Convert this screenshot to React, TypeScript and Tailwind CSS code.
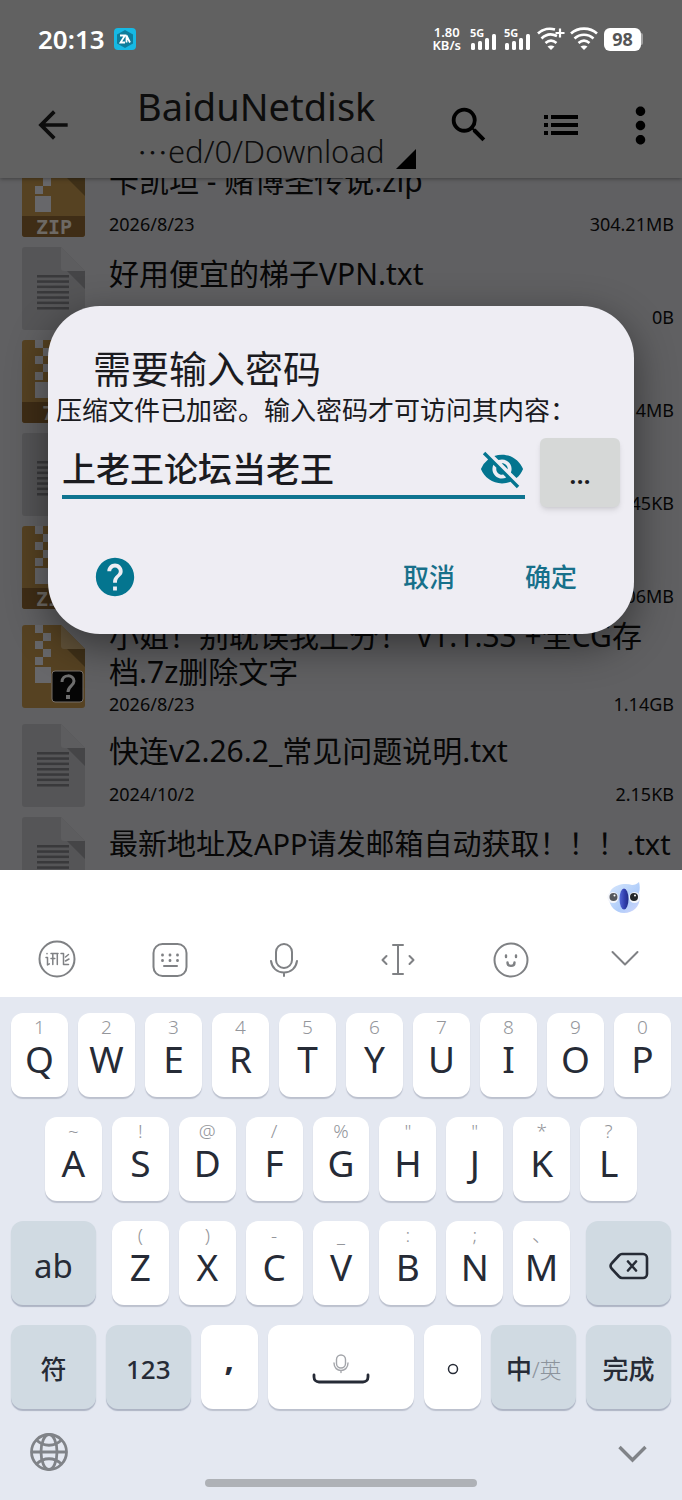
import React from 'react';
import { MdArrowBack, MdHelp, MdMoreVert, MdSearch, MdVisibilityOff } from 'react-icons/md';

type IconKind = 'zip' | '7z' | 'txt' | 'unknown';

interface FileItem {
    name: string;
    date: string;
    size: string;
    kind: IconKind;
    tall?: boolean;
    long?: boolean;
}

const files: FileItem[] = [
    { name: '卡凯坦 - 赌博圣传说.zip', date: '2026/8/23', size: '304.21MB', kind: 'zip' },
    { name: '好用便宜的梯子VPN.txt', date: '', size: '0B', kind: 'txt' },
    { name: '', date: '', size: '4MB', kind: '7z' },
    { name: '', date: '', size: '45KB', kind: 'txt' },
    { name: '', date: '', size: '06MB', kind: 'zip' },
    { name: '小姐！别耽误我上分！ v1.1.33 +全CG存档.7z删除文字', date: '2026/8/23', size: '1.14GB', kind: 'unknown', tall: true },
    { name: '快连v2.26.2_常见问题说明.txt', date: '2024/10/2', size: '2.15KB', kind: 'txt' },
    { name: '最新地址及APP请发邮箱自动获取！！！.txt', date: '', size: '', kind: 'txt', long: true },
];

const rowOne = [['Q', '1'], ['W', '2'], ['E', '3'], ['R', '4'], ['T', '5'], ['Y', '6'], ['U', '7'], ['I', '8'], ['O', '9'], ['P', '0']];
const rowTwo = [['A', '~'], ['S', '!'], ['D', '@'], ['F', '/'], ['G', '%'], ['H', '"'], ['J', '"'], ['K', '*'], ['L', '?']];
const rowThree = [['Z', '('], ['X', ')'], ['C', '-'], ['V', '_'], ['B', ':'], ['N', ';'], ['M', '、']];

const FileIcon: React.FC<{ kind: IconKind }> = ({ kind }) => {
    if (kind === 'txt') {
        return (
            <svg width="63" height="83" viewBox="0 0 63 83" className="shrink-0" aria-hidden="true">
                <path d="M3 0H39L63 24V80a3 3 0 0 1-3 3H3a3 3 0 0 1-3-3V3a3 3 0 0 1 3-3z" fill="#555557" />
                <path d="M39 0L63 24H42a3 3 0 0 1-3-3z" fill="#5d5d5f" />
                <path d="M45 24H63V42z" fill="#454547" />
                {[28, 33.3, 38.6, 44, 49.3, 54.6, 60].map((y) => (
                    <rect key={y} x="15" y={y} width="32" height="2.500" fill="#39393b" />
                ))}
            </svg>
        );
    }
    return (
        <svg width="63" height="83" viewBox="0 0 63 83" className="shrink-0" aria-hidden="true">
            <path d="M3 0H39L63 24V80a3 3 0 0 1-3 3H3a3 3 0 0 1-3-3V3a3 3 0 0 1 3-3z" fill="#564222" />
            <path d="M39 0L63 24H42a3 3 0 0 1-3-3z" fill="#615239" />
            <path d="M45 24H63V42z" fill="#3f3018" />
            <path d="M13 0h8v8h8v8h-8v8h8v8h-8v8h-8v-8h8v-8h-8v-8h8v-8h-8z" fill="#67676a" />
            <rect x="13" y="42" width="16" height="16" fill="#67676a" />
            {kind === 'unknown' ? (
                <g>
                    <rect x="30" y="46" width="31" height="31" rx="3" fill="#050505" stroke="#77706a" />
                    <path d="M40 57c0-8 12-8 12-1 0 5-6 5-6 11" fill="none" stroke="#6e6e6e" strokeWidth="3" />
                    <rect x="44" y="70" width="4" height="4" fill="#6e6e6e" />
                </g>
            ) : (
                <g>
                    <path d="M0 62H63V80a3 3 0 0 1-3 3H3a3 3 0 0 1-3-3z" fill="#3f2d16" />
                    <text x="32" y="80" textAnchor="middle" fontSize="20" fontWeight="700" fontFamily="DejaVu Sans Mono, monospace" fill="#6d6964">
                        {kind === 'zip' ? 'ZIP' : '7Z'}
                    </text>
                </g>
            )}
        </svg>
    );
};

const FileRow: React.FC<{ file: FileItem }> = ({ file }) => (
    <li className={file.tall ? 'flex h-[105px] items-center pl-[22px] pr-2' : 'flex h-[93px] items-center pl-[22px] pr-2'}>
        <FileIcon kind={file.kind} />
        <div className={file.tall ? 'ml-6 flex h-full flex-1 flex-col justify-between pt-1 pb-[3px]' : 'ml-6 flex h-full flex-1 flex-col justify-between pt-[14px] pb-[6px] whitespace-nowrap'}>
            <div className={file.long ? 'min-h-9 text-[29px] leading-9' : 'min-h-9 text-[30px] leading-9'}>{file.name}</div>
            <div className="flex h-6 justify-between text-[18px] leading-6">
                <span>{file.date}</span>
                <span>{file.size}</span>
            </div>
        </div>
    </li>
);

const SignalBars: React.FC = () => (
    <div className="flex w-[27px] flex-col">
        <span className="text-[11px] leading-[10px] font-bold">5G</span>
        <svg width="27" height="16" viewBox="0 0 27 16" className="-mt-1" aria-hidden="true">
            <g fill="#fff">
                <rect x="1" y="9" width="4" height="7" rx="1.5" />
                <rect x="8" y="7" width="4" height="9" rx="1.5" />
                <rect x="15" y="4" width="4" height="12" rx="1.5" />
                <rect x="22" y="0" width="4" height="16" rx="1.5" />
            </g>
        </svg>
    </div>
);

const Wifi: React.FC<{ plus?: boolean }> = ({ plus }) => (
    <svg width="28" height="24" viewBox="0 0 28 24" fill="none" stroke="#fff" strokeWidth="2.6" aria-hidden="true">
        <path d={plus ? 'M1 6.5C6 1.500 13 1 18 2.500' : 'M1 6.500C8 0 20 0 27 6.500'} />
        <path d={plus ? 'M4.500 11.500C9 7 15 6.500 20 9' : 'M4.500 11.500C10 6.500 18 6.500 23.500 11.500'} />
        <path d="M8.500 16C12 13 16 13 19.500 16" />
        <path d="M10.500 19.500C12.500 18 15.500 18 17.500 19.500L14 23z" fill="#fff" stroke="none" />
        {plus && <path d="M23 1.500v9M18.500 6h9" strokeWidth="2.200" />}
    </svg>
);

const StatusBar: React.FC = () => (
    <div className="flex h-[78px] items-center pl-[38px] pr-[39px] text-white">
        <span className="text-[26px] font-semibold">20:13</span>
        <svg width="22" height="22" viewBox="0 0 22 22" className="ml-[9px]" aria-hidden="true">
            <rect width="22" height="22" rx="4" fill="#16b9e4" />
            <path d="M11 2l8 4.500v9L11 20l-8-4.500v-9z" fill="#0e7d9b" />
            <path d="M6 7.500h5l-4.500 7h4.500M12.500 14.500v-7l3.500 7" fill="none" stroke="#fff" strokeWidth="1.800" />
        </svg>
        <div className="ml-auto flex items-center">
            <div className="mr-[9px] flex flex-col items-center text-[13px] leading-[13px] font-semibold">
                <span>1.80</span>
                <span>KB/s</span>
            </div>
            <SignalBars />
            <div className="w-[7px]" />
            <SignalBars />
            <div className="w-[6px]" />
            <Wifi plus />
            <div className="w-[5px]" />
            <Wifi />
            <div className="ml-[6px] flex h-[23px] w-[37px] items-center justify-center rounded-md bg-white text-[18px] font-bold text-[#555]">98</div>
            <div className="h-3 w-[2px] rounded-r bg-[#a0a0a0]" />
        </div>
    </div>
);

const Toolbar: React.FC = () => (
    <div className="flex h-[100px] items-center pr-[9px] text-[#0d0d0d]">
        <button type="button" aria-label="返回" className="mb-[6px] ml-[31px] shrink-0">
            <MdArrowBack size={44} />
        </button>
        <div className="ml-[62px] min-w-0 flex-1 whitespace-nowrap">
            <div className="text-[38px] leading-[46px]">BaiduNetdisk</div>
            <button type="button" className="flex text-[31px] leading-11 font-light">
                <span className="font-['Noto_Sans_CJK_SC']">…</span>
                <span>ed/0/Download</span>
                <svg width="20" height="20" viewBox="0 0 20 20" className="mt-5 ml-[11px]" aria-hidden="true">
                    <path d="M0 20L20 0V20z" fill="#000" />
                </svg>
            </button>
        </div>
        <button type="button" aria-label="搜索" className="mb-[6px] flex w-[92px] justify-center text-black">
            <MdSearch size={46} />
        </button>
        <button type="button" aria-label="列表" className="mb-[6px] flex w-[92px] justify-center">
            <svg width="34" height="20" viewBox="0 0 34 20" fill="#000" aria-hidden="true">
                <path d="M0 0h4v4H0zM0 8h4v4H0zM0 16h4v4H0zM7 0h27v4H7zM7 8h27v4H7zM7 16h27v4H7z" />
            </svg>
        </button>
        <button type="button" aria-label="更多" className="mb-[6px] flex w-[66px] justify-center text-black">
            <MdMoreVert size={57} />
        </button>
    </div>
);

const PasswordDialog: React.FC = () => (
    <div role="dialog" aria-labelledby="dialog-title" className="min-w-0 flex-1 rounded-[52px] bg-[#eeedf3] text-[#1b1b1f] shadow-[0_12px_40px_rgba(0,0,0,0.45)]">
        <h1 id="dialog-title" className="pt-10 pl-[45px] text-[38px] leading-11">需要输入密码</h1>
        <label htmlFor="password" className="block pl-2 text-[26px] leading-10 whitespace-nowrap">压缩文件已加密。输入密码才可访问其内容：</label>
        <div className="mt-2 flex gap-[15px] px-[14px]">
            <div className="flex h-[61px] min-w-0 flex-1 items-center border-b-4 border-[#0e7490] pt-1">
                <input id="password" type="text" defaultValue="上老王论坛当老王" className="min-w-0 flex-1 bg-transparent text-[34px] leading-12 font-medium outline-none" />
                <button type="button" aria-label="隐藏密码" className="text-[#04758f]">
                    <MdVisibilityOff size={46} />
                </button>
            </div>
            <button type="button" className="h-[69px] w-20 rounded-md bg-[#d6d8d7] pt-1 text-[26px] font-semibold shadow-md">...</button>
        </div>
        <div className="mt-11 flex h-[52px] items-center pr-[57px] pl-[44px] text-[26px] font-medium text-[#17708a]">
            <button type="button" aria-label="帮助" className="text-[#04758f]">
                <MdHelp size={46} />
            </button>
            <button type="button" className="ml-auto">取消</button>
            <button type="button" className="ml-[70px]">确定</button>
        </div>
        <div className="h-[31px]" />
    </div>
);

const LetterKey: React.FC<{ letter: string; hint: string }> = ({ letter, hint }) => (
    <button type="button" className="flex h-[84px] min-w-0 flex-[57_1_0%] flex-col items-center rounded-xl bg-white pt-1 text-[#262b36] shadow-[0_2px_1px_#bcc1ce]">
        <span className="h-5 text-[19px] leading-5 font-light text-[#94969b]">{hint}</span>
        <span className="text-[37px] leading-11">{letter}</span>
    </button>
);

const KeyRow: React.FC<{ keys: string[][] }> = ({ keys }) => (
    <>
        {keys.map(([letter, hint]) => (
            <LetterKey key={letter} letter={letter} hint={hint} />
        ))}
    </>
);

interface FnKeyProps {
    label?: string;
    className?: string;
    children: React.ReactNode;
}

const FnKey: React.FC<FnKeyProps> = ({ label, className = 'text-[26px] font-medium', children }) => (
    <button type="button" aria-label={label} className={`flex h-[84px] min-w-0 flex-[85_1_0%] items-center justify-center rounded-xl bg-[#d0dae2] pt-[5px] text-[#262b36] shadow-[0_2px_1px_#adb4c4] ${className}`}>
        {children}
    </button>
);

const Koala: React.FC = () => (
    <svg width="34" height="34" viewBox="0 0 34 34" aria-hidden="true">
        <defs>
            <linearGradient id="face" x1="0" y1="0" x2="1" y2="1">
                <stop offset="0" stopColor="#d9e8fc" />
                <stop offset="0.6" stopColor="#b0cdfa" />
                <stop offset="1" stopColor="#d3d6fb" />
            </linearGradient>
            <linearGradient id="nose" x1="0" y1="0" x2="1" y2="0">
                <stop offset="0" stopColor="#5468d6" />
                <stop offset="0.6" stopColor="#2f3cab" />
                <stop offset="1" stopColor="#232c85" />
            </linearGradient>
        </defs>
        <path d="M4 9C9 3 19 2 25 4c3 0 5-1 7-3 1 4 1 7 0 11 3 11-4 20-15 20S-2 20 4 9z" fill="url(#face)" />
        <circle cx="6" cy="16.500" r="5.500" fill="#f4f6fb" />
        <circle cx="27.500" cy="16.500" r="5.500" fill="#f4f6fb" />
        <circle cx="6.500" cy="16" r="4" fill="#55585d" />
        <circle cx="27" cy="16" r="4" fill="#22262b" />
        <circle cx="7.500" cy="14.500" r="1" fill="#fff" />
        <circle cx="28" cy="14.500" r="1" fill="#fff" />
        <ellipse cx="17" cy="18" rx="4.500" ry="10.500" fill="url(#nose)" />
    </svg>
);

const ToolButton: React.FC<{ label: string; children: React.ReactNode }> = ({ label, children }) => (
    <button type="button" aria-label={label} className="flex h-full items-center justify-center">
        <svg width="40" height="40" viewBox="0 0 40 40" fill="none" stroke="#7f8184" strokeWidth="2" strokeLinecap="round" strokeLinejoin="round">
            {children}
        </svg>
    </button>
);

const Keyboard: React.FC = () => (
    <div className="shrink-0 bg-[#e4e8f1]">
        <div className="bg-white">
            <div className="flex h-14 items-center justify-end pr-[41px]">
                <Koala />
            </div>
            <div className="grid h-[71px] grid-cols-6 pb-1">
                <ToolButton label="输入法">
                    <circle cx="20" cy="19" r="17.500" />
                    <path d="M10 13.500v.2M9 17.500h1.500V25l1.800-1.200M14 13.500h7M15.800 13.500v11M14 18.500h3.800M20.300 13.500v11M24 13.500h2.500V24.500h5M28.500 17l3-2.500M28.500 21l3.500-2" strokeWidth="1.500" />
                </ToolButton>
                <ToolButton label="键盘">
                    <rect x="3.500" y="4" width="33" height="32" rx="9" />
                    <path d="M12.500 15v.2M20 15v.2M27.500 15v.2M12.500 20.500v.2M20 20.500v.2M27.500 20.500v.2" strokeWidth="2.800" />
                    <path d="M14 26h13" />
                </ToolButton>
                <ToolButton label="语音">
                    <rect x="12" y="4" width="16" height="24" rx="8" />
                    <path d="M7 21c1 7 6 11.500 13 11.500S32 28 33 21M20 33v3" />
                </ToolButton>
                <ToolButton label="移动光标">
                    <path d="M15 5h10M15 34h10M20 5v29M8.500 16l-4 4 4 4M31.500 16l4 4-4 4" />
                </ToolButton>
                <ToolButton label="表情">
                    <circle cx="20" cy="20" r="16.500" />
                    <path d="M15 15.500v1.500M25 15.500v1.500M16.500 22.500c0 4.500 7 4.500 7 0" strokeWidth="2.400" />
                </ToolButton>
                <ToolButton label="收起">
                    <path d="M7.500 12L20 24.500 32.500 12" />
                </ToolButton>
            </div>
        </div>
        <div className="flex flex-col gap-5 px-[11px] pt-4">
            <div className="flex gap-[10px]">
                <KeyRow keys={rowOne} />
            </div>
            <div className="flex gap-[10px] px-[34px]">
                <KeyRow keys={rowTwo} />
            </div>
            <div className="flex gap-4">
                <FnKey className="text-[33px]">ab</FnKey>
                <div className="flex flex-[458_1_0%] gap-[10px]">
                    <KeyRow keys={rowThree} />
                </div>
                <FnKey label="删除">
                    <svg width="40" height="30" viewBox="0 0 40 30" fill="none" stroke="#262b36" strokeWidth="2.600" strokeLinecap="round" strokeLinejoin="round" aria-hidden="true">
                        <path d="M13 3h21a4 4 0 0 1 4 4v16a4 4 0 0 1-4 4H13c-1 0-2-.5-3-1.500L3 18c-2-2-2-4 0-6l7-7.500C11 3.500 12 3 13 3z" />
                        <path d="M19 10.500l8 9M27 10.500l-8 9" />
                    </svg>
                </FnKey>
            </div>
            <div className="flex gap-[10px]">
                <FnKey>符</FnKey>
                <FnKey>123</FnKey>
                <button type="button" className="h-[84px] flex-[57_1_0%] rounded-xl bg-white pb-4 text-[33px] font-bold text-[#262b36] shadow-[0_2px_1px_#bcc1ce]">,</button>
                <button type="button" aria-label="空格" className="flex h-[84px] flex-[147_1_0%] items-center justify-center rounded-xl bg-white pt-1 shadow-[0_2px_1px_#bcc1ce]">
                    <svg width="58" height="32" viewBox="0 0 58 32" fill="none" strokeLinecap="round" aria-hidden="true">
                        <rect x="24.500" y="2" width="9" height="13" rx="4.500" stroke="#a3a5aa" strokeWidth="1.400" />
                        <path d="M22 10c0 10 14 10 14 0M29 17.500v2" stroke="#a3a5aa" strokeWidth="1.400" />
                        <path d="M2 22v2c0 3 2 5 5 5h44c3 0 5-2 5-5v-2" stroke="#262b36" strokeWidth="2.800" />
                    </svg>
                </button>
                <button type="button" aria-label="句号" className="flex h-[84px] flex-[57_1_0%] items-center justify-center rounded-xl bg-white pt-1 shadow-[0_2px_1px_#bcc1ce]">
                    <svg width="12" height="12" viewBox="0 0 12 12" aria-hidden="true">
                        <circle cx="6" cy="6" r="4.500" fill="none" stroke="#262b36" strokeWidth="1.500" />
                    </svg>
                </button>
                <FnKey>
                    中<span className="text-[22px] font-light text-[#8c939c]">/英</span>
                </FnKey>
                <FnKey>完成</FnKey>
            </div>
        </div>
        <div className="flex h-[69px] items-center justify-between pt-4 pr-[34px] pl-[29px]">
            <button type="button" aria-label="切换语言">
                <svg width="40" height="40" viewBox="0 0 40 40" fill="none" stroke="#808388" strokeWidth="2.800" aria-hidden="true">
                    <circle cx="20" cy="20" r="17.500" />
                    <ellipse cx="20" cy="20" rx="8" ry="17.500" />
                    <path d="M2.500 20h35M7.500 8c7 7 18 7 25 0M7.500 32c7-7 18-7 25 0" />
                </svg>
            </button>
            <button type="button" aria-label="隐藏键盘" className="pt-1">
                <svg width="31" height="20" viewBox="0 0 31 20" fill="none" stroke="#808388" strokeWidth="3.400" aria-hidden="true">
                    <path d="M2.500 3L15.500 16 28.500 3" />
                </svg>
            </button>
        </div>
        <div className="flex h-[22px] justify-center pt-[1px]">
            <div className="h-2 w-2/5 rounded-full bg-[#aeb1b6]" />
        </div>
    </div>
);

const App: React.FC = () => {
    return (
        <div className="flex h-screen flex-col overflow-hidden font-['Noto_Sans','Noto_Sans_CJK_SC',sans-serif]" lang="zh-CN">
            <div className="relative flex min-h-0 flex-1 flex-col bg-[#606062]">
                <header className="relative z-10 shrink-0 bg-[#616161] shadow-[0_1px_4px_rgba(0,0,0,0.35)]">
                    <StatusBar />
                    <Toolbar />
                </header>
                <main className="min-h-0 flex-1 overflow-hidden text-[#070707]">
                    <ul className="-mt-[29px]">
                        {files.map((file, i) => (
                            <FileRow key={i} file={file} />
                        ))}
                    </ul>
                </main>
                <div className="absolute inset-0 z-20 flex items-center px-12 pt-[70px]">
                    <PasswordDialog />
                </div>
            </div>
            <Keyboard />
        </div>
    );
};

export default App;
